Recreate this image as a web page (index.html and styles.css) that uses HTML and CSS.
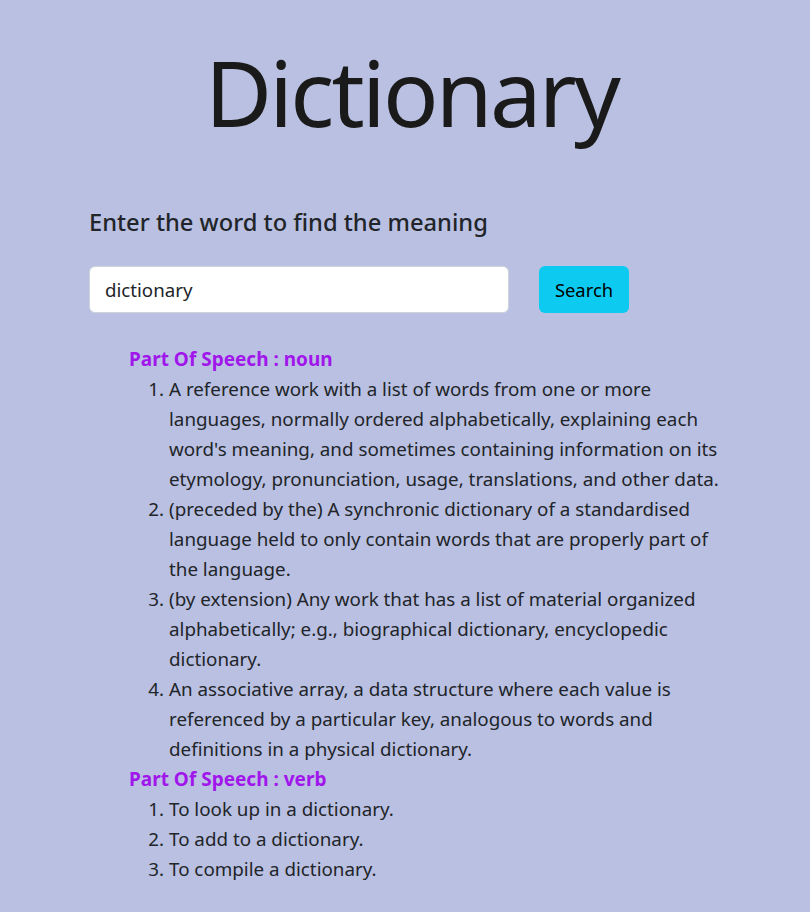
FILE: index.html
```html
<!DOCTYPE html>
<html lang="en">
<head>
<meta charset="utf-8">
<title>Dictionary</title>
<link rel="stylesheet" href="styles.css">
</head>
<body>
<div class="page">
  <h1 class="title">Dictionary</h1>
  <div class="main">
    <h4 class="prompt">Enter the word to find the meaning</h4>
    <form class="search-row">
      <input class="search-input" type="text" value="dictionary">
      <button class="search-btn" type="button">Search</button>
    </form>
    <div class="results">
      <div class="pos">Part Of Speech : noun</div>
      <ol class="defs">
        <li>A reference work with a list of words from one or more languages, normally ordered alphabetically, explaining each word's meaning, and sometimes containing information on its etymology, pronunciation, usage, translations, and other data.</li>
        <li>(preceded by the) A synchronic dictionary of a standardised language held to only contain words that are properly part of the language.</li>
        <li>(by extension) Any work that has a list of material organized alphabetically; e.g., biographical dictionary, encyclopedic dictionary.</li>
        <li>An associative array, a data structure where each value is referenced by a particular key, analogous to words and definitions in a physical dictionary.</li>
      </ol>
      <div class="pos">Part Of Speech : verb</div>
      <ol class="defs">
        <li>To look up in a dictionary.</li>
        <li>To add to a dictionary.</li>
        <li>To compile a dictionary.</li>
      </ol>
    </div>
  </div>
</div>
</body>
</html>
```
FILE: styles.css
```css
html, body {
  margin: 0;
  padding: 0;
  background: #bac0e2;
}
body {
  font-family: "Noto Sans", "Open Sans", sans-serif;
  color: #212529;
  min-height: 912px;
}
.title {
  margin: 0;
  padding-top: 34px;
  padding-left: 13px;
  text-align: center;
  font-size: 92px;
  font-weight: 450;
  letter-spacing: -2.8px;
  line-height: 115px;
  color: #1a1a1a;
}
.main {
  padding: 0 0 0 89px;
}
.prompt {
  margin: 59px 0 0 0;
  font-size: 23.7px;
  font-weight: 500;
  line-height: 1.2;
}
.search-row {
  display: flex;
  gap: 30px;
  margin-top: 30px;
}
.search-input {
  box-sizing: border-box;
  width: 420px;
  height: 47px;
  padding: 6px 15px;
  border: 1px solid #ced4da;
  border-radius: 6px;
  background: #fff;
  font-family: inherit;
  font-size: 18.7px;
  color: #212529;
}
.search-btn {
  box-sizing: border-box;
  width: 90px;
  height: 47px;
  border: 0;
  border-radius: 6px;
  background: #0dcaf0;
  font-family: inherit;
  font-size: 18.4px;
  color: #000;
}
.results {
  margin-top: 31px;
  padding-left: 40px;
  width: 600px;
  font-size: 18.8px;
  line-height: 30px;
}
.pos {
  font-size: 19px;
  font-weight: 700;
  color: #a016eb;
}
.defs {
  margin: 0;
  padding-left: 40px;
}
```
